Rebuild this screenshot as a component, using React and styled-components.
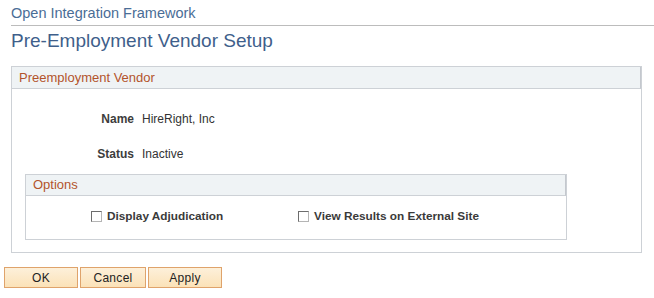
import React from "react";
import styled, { createGlobalStyle } from "styled-components";

const Global = createGlobalStyle`
  body {
    margin: 0;
    background: #ffffff;
    font-family: "Liberation Sans", Arial, sans-serif;
  }
`;

const Page = styled.div`
  width: 654px;
  height: 298px;
  overflow: hidden;
`;

const Breadcrumb = styled.div`
  margin-left: 11px;
  padding: 5px 0 3px;
  font-size: 14.5px;
  line-height: 17px;
  color: #4a6d96;
  border-bottom: 1px solid #bcbcbc;
`;

const Title = styled.h1`
  margin: 4px 0 0 11px;
  font-size: 19px;
  line-height: 21px;
  font-weight: normal;
  color: #3f5f8b;
`;

const GroupBox = styled.section`
  margin: ${(p) => p.$margin};
  width: ${(p) => p.$width}px;
  box-sizing: border-box;
  border: 1px solid #cdd1d6;
`;

const GroupHeader = styled.div`
  height: ${(p) => p.$height}px;
  line-height: ${(p) => p.$height}px;
  padding-left: 7px;
  background: #eff3f5;
  border-bottom: 1px solid #cdd1d6;
  border-right: 1px solid #c4c8ce;
  font-size: 13px;
  color: #b3532c;
`;

const VendorBody = styled.div`
  padding: 23px 0 12px 0;
`;

const FieldGrid = styled.div`
  display: grid;
  grid-template-columns: 122px 1fr;
  column-gap: 8px;
  row-gap: 21px;
  margin-bottom: 13px;
  font-size: 12px;
  line-height: 14px;
`;

const Label = styled.div`
  text-align: right;
  font-weight: bold;
  color: #3d3d3d;
`;

const Value = styled.div`
  color: #333333;
`;

const OptionsBody = styled.div`
  display: grid;
  grid-template-columns: 207px 1fr;
  padding: 13px 0 16px 65px;
  font-size: 12px;
  line-height: 14px;
`;

const CheckItem = styled.label`
  display: flex;
  align-items: center;
  gap: 5px;
  font-weight: bold;
  font-size: 11.8px;
  color: #3a3a3a;
`;

const Box = styled.span`
  width: 11px;
  height: 11px;
  box-sizing: border-box;
  border: 1px solid #6d6d6d;
  border-right-color: #b5b5b5;
  border-bottom-color: #b5b5b5;
  background: #ffffff;
  margin-top: 1px;
`;

const ButtonRow = styled.div`
  display: flex;
  gap: 2px;
  margin: 14px 0 0 4px;
`;

const Button = styled.button`
  width: ${(p) => p.$width}px;
  height: 21px;
  padding: 0;
  border: 1px solid #dfa36b;
  background: linear-gradient(#fdf0da, #fbe2b8);
  font-family: "Liberation Sans", Arial, sans-serif;
  font-size: 12px;
  color: #222222;
  letter-spacing: 0.3px;
`;

export default function App() {
  return (
    <Page>
      <Global />
      <Breadcrumb>Open Integration Framework</Breadcrumb>
      <Title>Pre-Employment Vendor Setup</Title>
      <GroupBox $margin="15px 0 0 11px" $width={631}>
        <GroupHeader $height={21}>Preemployment Vendor</GroupHeader>
        <VendorBody>
          <FieldGrid>
            <Label>Name</Label>
            <Value>HireRight, Inc</Value>
            <Label>Status</Label>
            <Value>Inactive</Value>
          </FieldGrid>
          <GroupBox $margin="0 0 0 13px" $width={542}>
            <GroupHeader $height={20}>Options</GroupHeader>
            <OptionsBody>
              <CheckItem>
                <Box />
                Display Adjudication
              </CheckItem>
              <CheckItem>
                <Box />
                View Results on External Site
              </CheckItem>
            </OptionsBody>
          </GroupBox>
        </VendorBody>
      </GroupBox>
      <ButtonRow>
        <Button $width={74}>OK</Button>
        <Button $width={66}>Cancel</Button>
        <Button $width={74}>Apply</Button>
      </ButtonRow>
    </Page>
  );
}
